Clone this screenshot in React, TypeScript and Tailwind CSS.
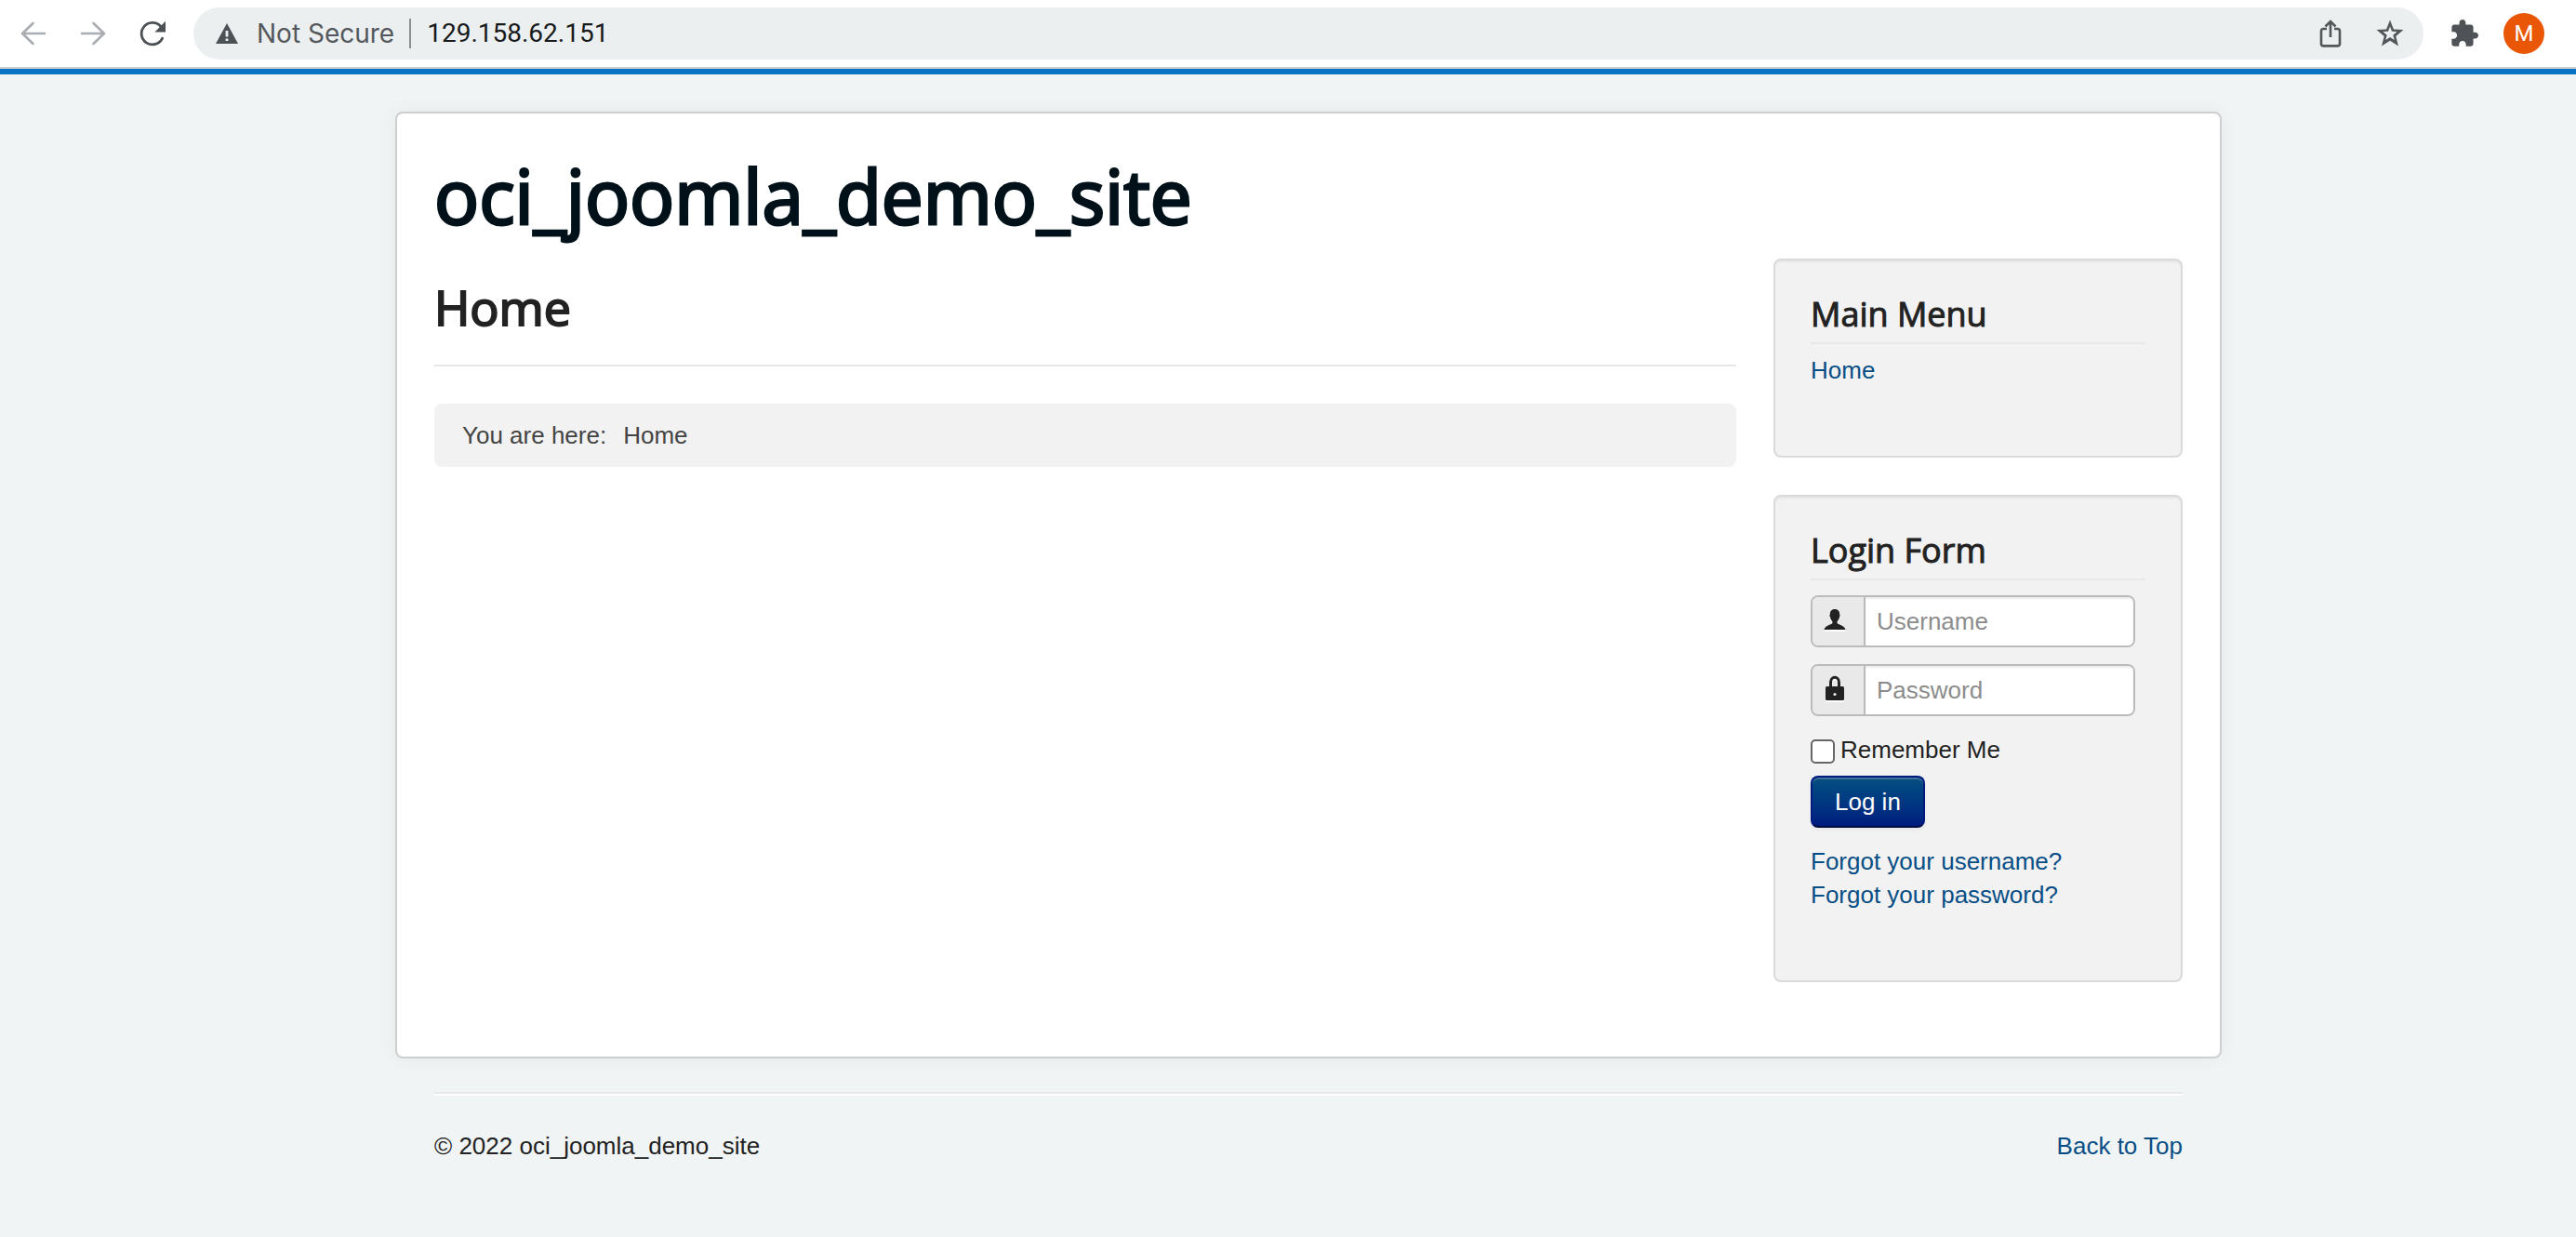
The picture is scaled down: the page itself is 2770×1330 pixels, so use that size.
import React from 'react';

const link = 'text-[#084e85] hover:underline';

function ArrowIcon({ flip = false }: { flip?: boolean }) {
  return (
    <svg viewBox="0 0 28 28" className="size-7" fill="none" stroke="#a9adb1" strokeWidth="2.6" strokeLinecap="round" aria-hidden="true">
      {flip ? <path d="M2 14H26M14.500 3L26 14L14.500 25" /> : <path d="M26 14H2M13.500 3L2 14L13.500 25" />}
    </svg>
  );
}

function ReloadIcon() {
  return (
    <svg viewBox="0 0 28 28" className="size-7" aria-hidden="true">
      <path d="M24.600 19.200A11.800 11.800 0 1 1 22.500 6" fill="none" stroke="#4c5155" strokeWidth="2.800" strokeLinecap="round" />
      <path d="M28 0.800V12.400H16.400Z" fill="#4c5155" />
    </svg>
  );
}

function WarningIcon() {
  return (
    <svg viewBox="0 0 24 22" className="h-[22px] w-6 shrink-0" aria-hidden="true">
      <path d="M12 0L24 22H0Z" fill="#4c5155" />
      <path d="M10.600 8H13.400V14.400H10.600ZM10.600 16.400H13.400V19H10.600Z" fill="#ebeff1" />
    </svg>
  );
}

function ShareIcon() {
  return (
    <svg viewBox="0 0 24 30" className="h-[30px] w-6" fill="none" stroke="#54575a" strokeWidth="2.6" aria-hidden="true">
      <path d="M8 10H4.500Q2 10 2 12.500V26Q2 28.400 4.500 28.400H19.500Q22 28.400 22 26V12.500Q22 10 19.500 10H16" />
      <path d="M12 19V3M6.500 7.500L12 2L17.500 7.500" />
    </svg>
  );
}

function StarIcon() {
  return (
    <svg viewBox="0 0 30 30" className="size-[30px]" aria-hidden="true">
      <path
        d="M15 0.500L18.900 10.400L29.500 11.100L21.300 17.900L24 28.500L15 22.700L6 28.500L8.700 17.900L0.500 11.100L11.100 10.400ZM15 7.600L13 12.700L7.500 13.100L11.700 16.700L10.300 22.100L15 19.100L19.700 22.100L18.300 16.700L22.500 13.100L17 12.700Z"
        fill="#54575a"
        fillRule="evenodd"
      />
    </svg>
  );
}

function PuzzleIcon() {
  return (
    <svg viewBox="1 1 22 22" className="size-[30px]" fill="#4f5357" aria-hidden="true">
      <path d="M20.500 11H19V7c0-1.100-.9-2-2-2h-4V3.500C13 2.120 11.880 1 10.500 1S8 2.120 8 3.500V5H4c-1.100 0-1.990.9-1.990 2v3.800H3.500c1.490 0 2.700 1.210 2.700 2.700s-1.210 2.700-2.700 2.700H2V20c0 1.100.9 2 2 2h3.800v-1.500c0-1.490 1.210-2.700 2.700-2.700 1.490 0 2.700 1.210 2.700 2.700V22H17c1.100 0 2-.9 2-2v-4h1.500c1.380 0 2.500-1.120 2.500-2.500S21.880 11 20.500 11z" />
    </svg>
  );
}

function UserIcon() {
  return (
    <svg viewBox="0 0 24 24" className="size-6 drop-shadow-[0_2px_0_#fff]" fill="#222" aria-hidden="true">
      <path d="M12 1C15.400 1 17.200 3.200 17.100 6.200C17.600 7 17.800 8.200 17 9.600C16.700 11.800 15.600 13.400 14.600 14.200V16C16 18 22.500 18.200 23.500 23H0.500C1.500 18.200 8 18 9.400 16V14.200C8.400 13.400 7.300 11.800 7 9.600C6.200 8.200 6.400 7 6.900 6.200C6.800 3.200 8.600 1 12 1Z" />
    </svg>
  );
}

function LockIcon() {
  return (
    <svg viewBox="0 0 20 28" className="h-7 w-5 drop-shadow-[0_2px_0_#fff]" aria-hidden="true">
      <path d="M5.500 14V8C5.500 0.300 14.500 0.300 14.500 8V14" fill="none" stroke="#222" strokeWidth="3" />
      <rect y="12" width="20" height="15" rx="1.500" fill="#222" />
      <circle cx="10" cy="20.500" r="1.600" fill="#eee" />
    </svg>
  );
}

function BrowserBar() {
  return (
    <header className="flex h-[74px] items-center border-b-2 border-[#cbcdce] bg-white pr-[34px] pl-[22px]">
      <nav className="flex items-center gap-9" aria-label="History">
        <button className="block" aria-label="Back"><ArrowIcon /></button>
        <button className="block" aria-label="Forward"><ArrowIcon flip /></button>
        <button className="block" aria-label="Reload"><ReloadIcon /></button>
      </nav>
      <div className="ml-[30px] flex h-14 grow items-center rounded-full bg-[#ebeff0] pr-[21px] pl-6 font-['Inter',sans-serif] text-[28px]">
        <WarningIcon />
        <span className="ml-5 whitespace-nowrap text-[#54585c]">Not Secure</span>
        <span className="mr-[17px] ml-4 h-8 w-0.5 bg-[#8b8f92]" />
        <input
          aria-label="Address"
          defaultValue="129.158.62.151"
          className="min-w-0 grow bg-transparent font-['Roboto',sans-serif] text-[#17191b] outline-none"
        />
        <button className="mr-[37px]" aria-label="Share"><ShareIcon /></button>
        <button aria-label="Bookmark"><StarIcon /></button>
      </div>
      <button className="ml-[29px]" aria-label="Extensions"><PuzzleIcon /></button>
      <button className="ml-[27px] size-11 rounded-full bg-[#e95605] font-['Roboto',sans-serif] text-2xl text-white" aria-label="Profile M">M</button>
    </header>
  );
}

function Well({ title, children }: { title: string; children: React.ReactNode }) {
  return (
    <section className="rounded-lg border-2 border-[#dadada] bg-[#f2f2f2] p-[38px] pb-[74px] shadow-[inset_0_2px_2px_rgba(0,0,0,0.05)]">
      <h3 className="mb-2.5 border-b-2 border-[#e8e8e8] pb-2.5 font-['Open_Sans',sans-serif] text-[36px] leading-10 text-[#222] [-webkit-text-stroke:1px_#222]">
        {title}
      </h3>
      {children}
    </section>
  );
}

function Field({ id, label, type, icon }: { id: string; label: string; type: string; icon: React.ReactNode }) {
  return (
    <div className="mb-[18px] mr-[11px] flex h-14 overflow-hidden rounded-lg border-2 border-[#bbb]">
      <label htmlFor={id} aria-label={label} className="flex w-[57px] shrink-0 items-center justify-center border-r-2 border-[#bbb] bg-[#e9e9e9] pr-2 pb-1">
        {icon}
      </label>
      <input
        id={id}
        type={type}
        placeholder={label}
        className="min-w-0 grow bg-white px-3 text-[26px] shadow-[inset_0_2px_2px_rgba(0,0,0,0.075)] outline-none placeholder:text-[#8c8c8c]"
      />
    </div>
  );
}

export default function App() {
  return (
    <div className="min-h-screen bg-[#f0f4f5] font-['Liberation_Sans',Arial,sans-serif] text-[26px] leading-9 text-[#222]">
      <BrowserBar />
      <div className="border-t-6 border-[#0a74c4] pt-10 pl-11">
        <div className="mx-auto max-w-[1964px] rounded-lg border-2 border-[#cdcecf] bg-white px-10 pt-10 pb-20 shadow-[0_0_20px_rgba(0,0,0,0.05)]">
          <h1 className="mb-5 font-['Open_Sans',sans-serif] text-[80px] leading-24 text-[#001119] [-webkit-text-stroke:3px_#001119]">
            oci_joomla_demo_site
          </h1>
          <div className="flex items-start gap-10">
            <main className="grow">
              <h2 className="mb-10 border-b-2 border-[#e6e6e6] pt-[22px] pb-8 font-['Open_Sans',sans-serif] text-[52px] leading-[60px] text-[#222] [-webkit-text-stroke:2px_#222]">
                Home
              </h2>
              <nav aria-label="Breadcrumb" className="flex gap-[18px] rounded-lg bg-[#f2f2f2] px-[30px] py-4 text-[#444]">
                <span>You are here:</span>
                <span>Home</span>
              </nav>
            </main>
            <aside className="flex w-[440px] shrink-0 flex-col gap-10">
              <Well title="Main Menu">
                <a href="#home" className={link}>Home</a>
              </Well>
              <Well title="Login Form">
                <form className="pt-1.5">
                  <Field id="username" label="Username" type="text" icon={<UserIcon />} />
                  <Field id="password" label="Password" type="password" icon={<LockIcon />} />
                  <label className="flex items-center gap-1.5">
                    <input type="checkbox" className="mt-1 size-[26px] appearance-none rounded-[5px] border-2 border-[#666] bg-white" />
                    Remember Me
                  </label>
                  <button
                    type="button"
                    className="mt-2.5 mb-[18px] h-14 rounded-lg border-2 border-[#001a80] border-b-[#000c3d] bg-linear-to-b from-[#0a4f80] to-[#001a80] px-6 text-white shadow-[inset_0_2px_0_rgba(255,255,255,0.2),0_2px_4px_rgba(0,0,0,0.05)]"
                  >
                    Log in
                  </button>
                  <ul>
                    <li><a href="#remind" className={link}>Forgot your username?</a></li>
                    <li><a href="#reset" className={link}>Forgot your password?</a></li>
                  </ul>
                </form>
              </Well>
            </aside>
          </div>
        </div>
        <footer className="mx-auto max-w-[1964px] px-[42px] pt-9">
          <div className="flex justify-between border-t-2 border-[#e7e7e7] pt-[38px] shadow-[inset_0_2px_0_#fff]">
            <p>© 2022 oci_joomla_demo_site</p>
            <a href="#top" className={link}>Back to Top</a>
          </div>
        </footer>
      </div>
    </div>
  );
}
